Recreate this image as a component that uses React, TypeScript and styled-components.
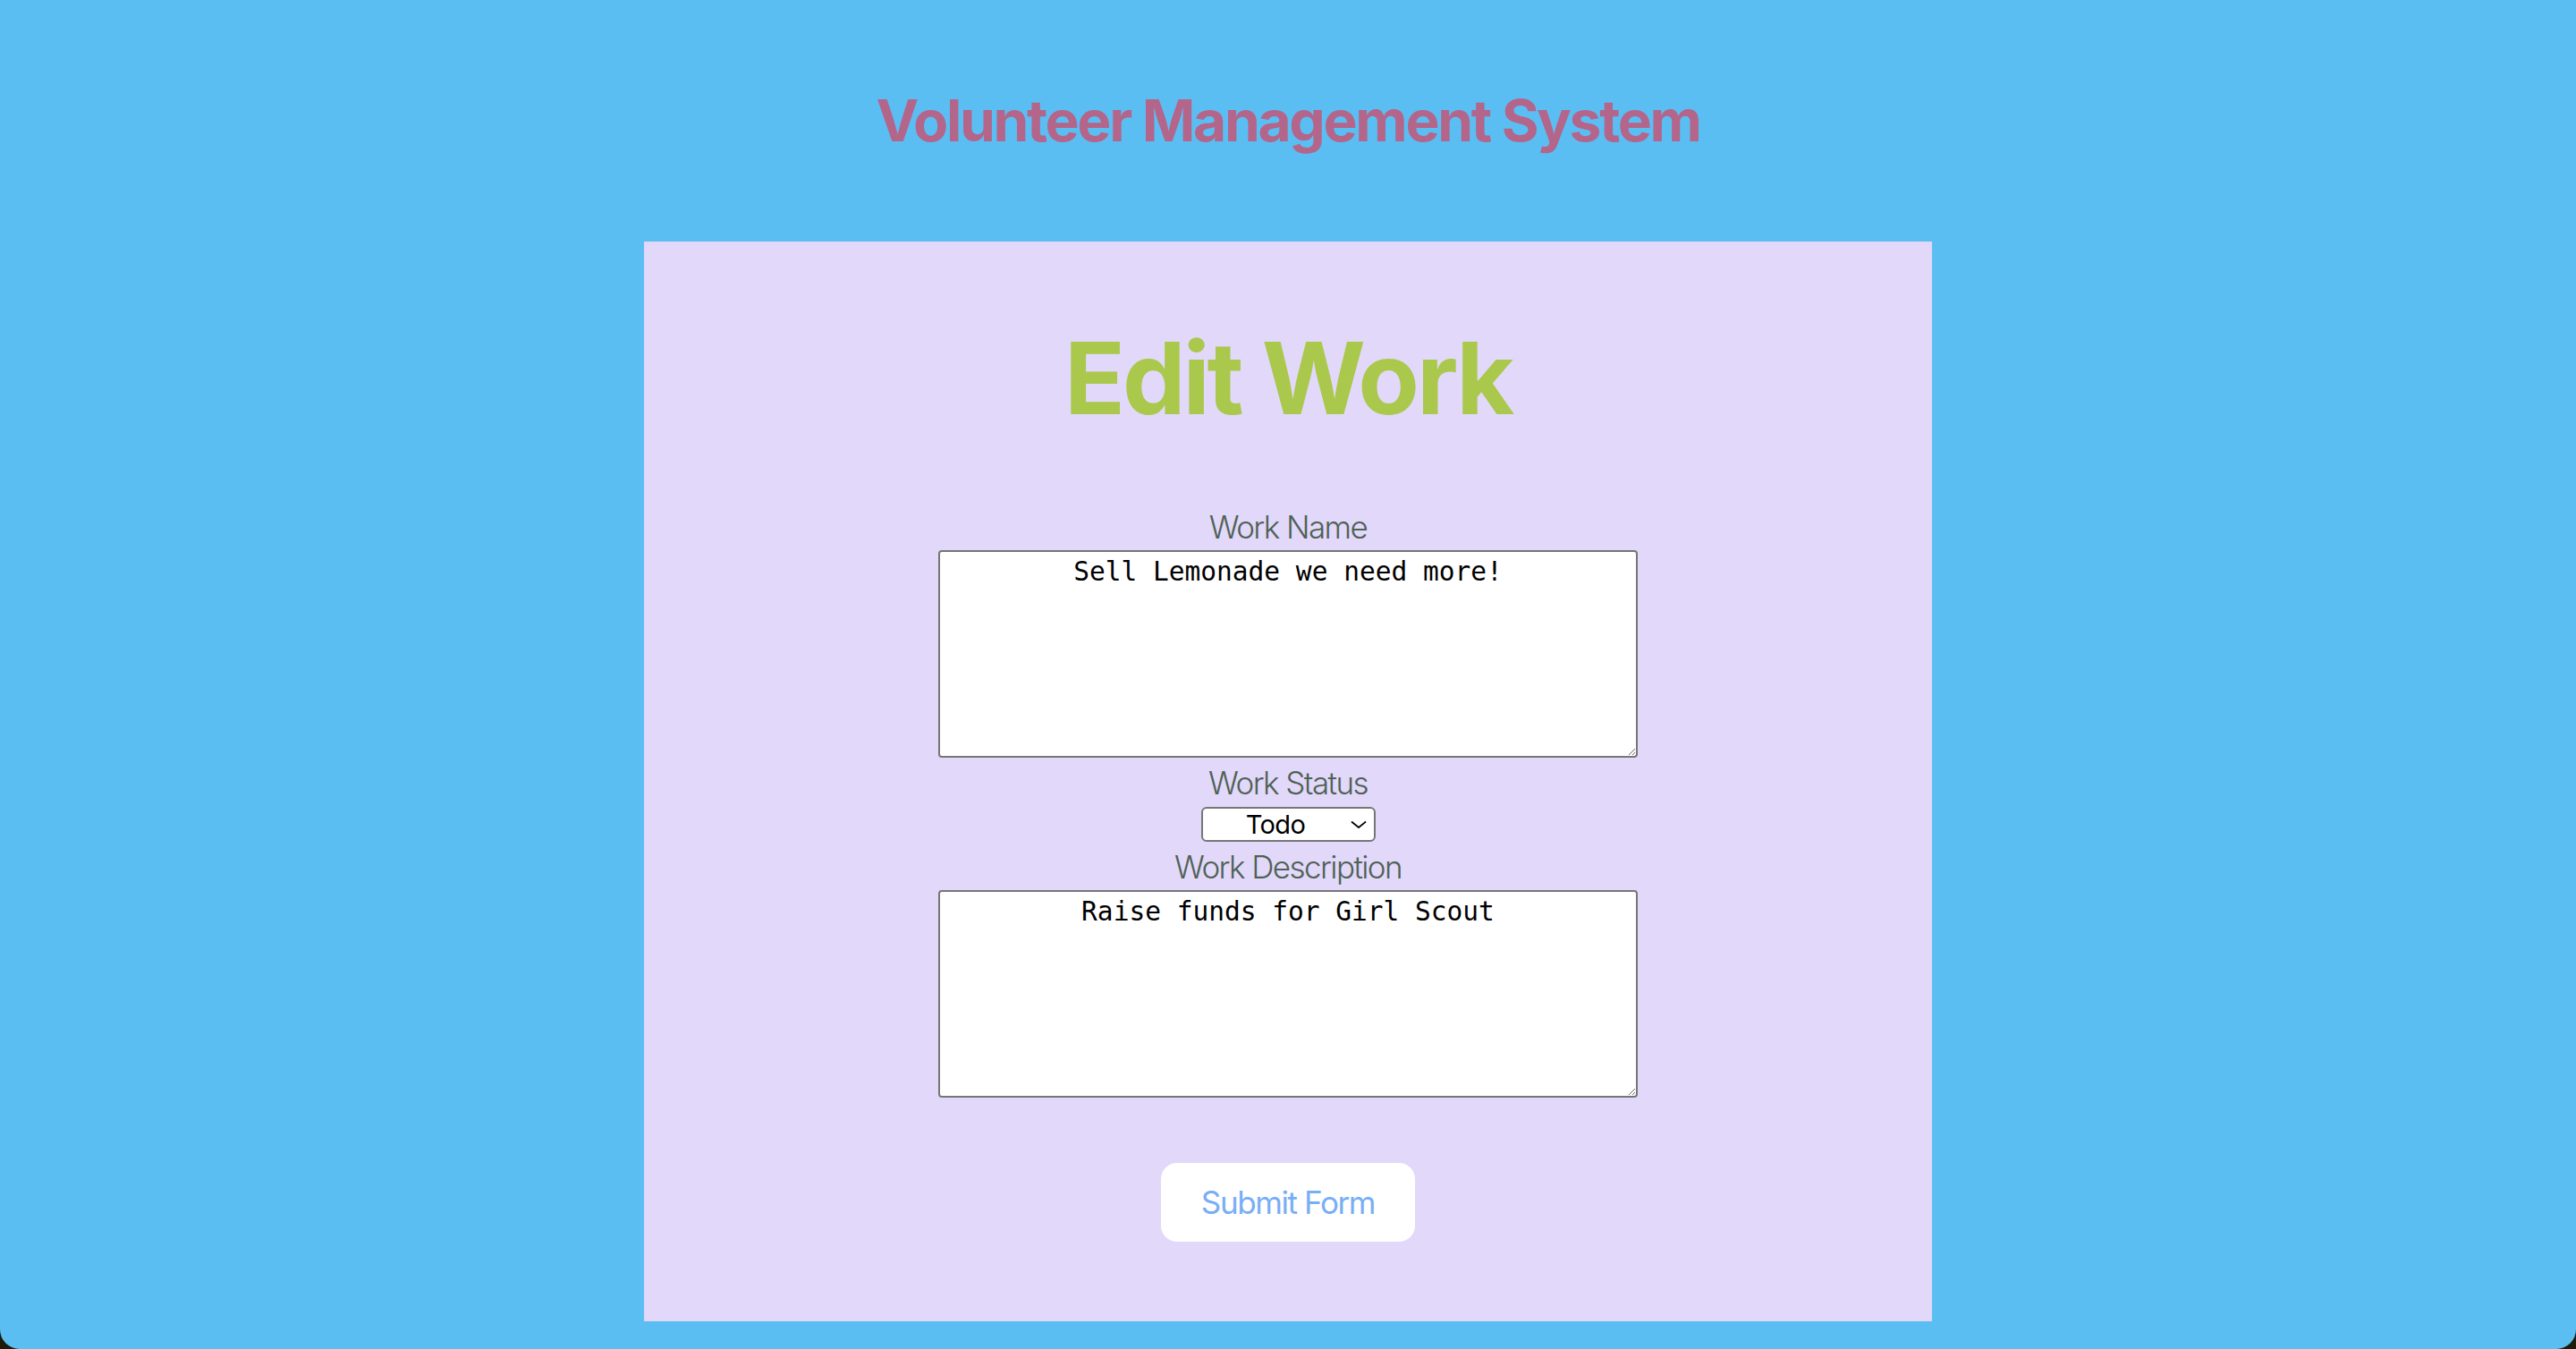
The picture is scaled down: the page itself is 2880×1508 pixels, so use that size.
import styled, { createGlobalStyle } from 'styled-components';
import { useState } from 'react';

const GlobalStyle = createGlobalStyle`
  html, body {
    margin: 0;
    padding: 0;
    background-color: #1d1b0c;
  }
  * {
    box-sizing: border-box;
  }
`;

const Page = styled.div`
  min-height: 100vh;
  display: flex;
  flex-direction: column;
  align-items: center;
  background-color: #5bbef3;
  border-radius: 0 0 22px 22px;
  font-family: Inter, 'Noto Sans', sans-serif;
`;

const Title = styled.h1`
  margin: 96px 0 97px;
  font-size: 64px;
  font-weight: 700;
  letter-spacing: -0.036em;
  line-height: 1.21;
  color: #b4658a;
`;

const Card = styled.div`
  width: 50%;
  min-height: 1206px;
  display: flex;
  flex-direction: column;
  align-items: center;
  padding: 85px 0 89px;
  background-color: #e2d8fa;
`;

const Heading = styled.h2`
  margin: 0 0 77px;
  font-size: 112px;
  font-weight: 700;
  letter-spacing: -0.028em;
  line-height: 1.21;
  color: #aac84b;
`;

const Form = styled.form`
  display: flex;
  flex-direction: column;
  align-items: center;
`;

const Label = styled.label<{ $first?: boolean }>`
  margin: ${(props) => (props.$first ? '0' : '7px')} 0 5px;
  font-size: 35px;
  font-weight: 300;
  letter-spacing: -0.045em;
  line-height: 1.21;
  color: #4f6155;
`;

const TextArea = styled.textarea`
  width: 782px;
  height: 232px;
  padding: 5px 4px;
  border: 2px solid #767676;
  border-radius: 4px;
  background-color: #fff;
  color: #000;
  font-family: 'DejaVu Sans Mono', 'Liberation Mono', monospace;
  font-size: 29.5px;
  line-height: 1.2;
  text-align: center;
`;

const SelectWrap = styled.div`
  position: relative;
  width: 195px;
  height: 39px;
`;

const Select = styled.select`
  width: 100%;
  height: 100%;
  padding: 0 30px 0 2px;
  appearance: none;
  border: 2px solid #767676;
  border-radius: 6px;
  background-color: #fff;
  color: #000;
  font-family: Inter, 'Noto Sans', sans-serif;
  font-size: 29px;
  letter-spacing: -0.02em;
  text-align: center;
  text-align-last: center;
`;

const Chevron = styled.svg`
  position: absolute;
  right: 10px;
  top: 15px;
  pointer-events: none;
`;

const SubmitButton = styled.button`
  margin-top: 73px;
  width: 284px;
  height: 88px;
  border: 0;
  border-radius: 18px;
  background-color: #fff;
  color: #78aef5;
  font-family: Inter, 'Noto Sans', sans-serif;
  font-size: 35px;
  font-weight: 400;
  letter-spacing: -0.04em;
  cursor: pointer;
`;

function App() {
  const [name, setName] = useState('Sell Lemonade we need more!');
  const [status, setStatus] = useState('Todo');
  const [description, setDescription] = useState('Raise funds for Girl Scout');

  return (
    <>
      <GlobalStyle />
      <Page>
        <Title>Volunteer Management System</Title>
        <Card>
          <Heading>Edit Work</Heading>
          <Form onSubmit={(e) => e.preventDefault()}>
            <Label $first htmlFor="workName">
              Work Name
            </Label>
            <TextArea id="workName" value={name} onChange={(e) => setName(e.target.value)} />
            <Label htmlFor="workStatus">Work Status</Label>
            <SelectWrap>
              <Select id="workStatus" value={status} onChange={(e) => setStatus(e.target.value)}>
                <option>Todo</option>
                <option>In Progress</option>
                <option>Done</option>
              </Select>
              <Chevron width="18" height="9" viewBox="0 0 18 9">
                <path d="M1 1.5 L9 8 L17 1.5" fill="none" stroke="#000" strokeWidth="1.8" />
              </Chevron>
            </SelectWrap>
            <Label htmlFor="workDescription">Work Description</Label>
            <TextArea
              id="workDescription"
              value={description}
              onChange={(e) => setDescription(e.target.value)}
            />
            <SubmitButton type="submit">Submit Form</SubmitButton>
          </Form>
        </Card>
      </Page>
    </>
  );
}

export default App;
